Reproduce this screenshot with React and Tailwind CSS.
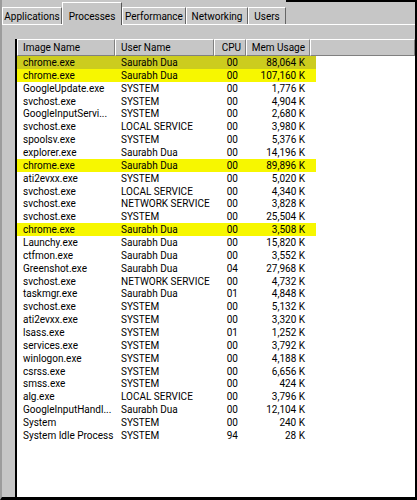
import React from "react";

const rows = [
  ["chrome.exe", "Saurabh Dua", "00", "88,064 K", "sel"],
  ["chrome.exe", "Saurabh Dua", "00", "107,160 K", "hl"],
  ["GoogleUpdate.exe", "SYSTEM", "00", "1,776 K"],
  ["svchost.exe", "SYSTEM", "00", "4,904 K"],
  ["GoogleInputServi...", "SYSTEM", "00", "2,680 K"],
  ["svchost.exe", "LOCAL SERVICE", "00", "3,980 K"],
  ["spoolsv.exe", "SYSTEM", "00", "5,376 K"],
  ["explorer.exe", "Saurabh Dua", "00", "14,196 K"],
  ["chrome.exe", "Saurabh Dua", "00", "89,896 K", "hl"],
  ["ati2evxx.exe", "SYSTEM", "00", "5,020 K"],
  ["svchost.exe", "LOCAL SERVICE", "00", "4,340 K"],
  ["svchost.exe", "NETWORK SERVICE", "00", "3,828 K"],
  ["svchost.exe", "SYSTEM", "00", "25,504 K"],
  ["chrome.exe", "Saurabh Dua", "00", "3,508 K", "hl"],
  ["Launchy.exe", "Saurabh Dua", "00", "15,820 K"],
  ["ctfmon.exe", "Saurabh Dua", "00", "3,552 K"],
  ["Greenshot.exe", "Saurabh Dua", "04", "27,968 K"],
  ["svchost.exe", "NETWORK SERVICE", "00", "4,732 K"],
  ["taskmgr.exe", "Saurabh Dua", "01", "4,848 K"],
  ["svchost.exe", "SYSTEM", "00", "5,132 K"],
  ["ati2evxx.exe", "SYSTEM", "00", "3,320 K"],
  ["lsass.exe", "SYSTEM", "01", "1,252 K"],
  ["services.exe", "SYSTEM", "00", "3,792 K"],
  ["winlogon.exe", "SYSTEM", "00", "4,188 K"],
  ["csrss.exe", "SYSTEM", "00", "6,656 K"],
  ["smss.exe", "SYSTEM", "00", "424 K"],
  ["alg.exe", "LOCAL SERVICE", "00", "3,796 K"],
  ["GoogleInputHandl...", "Saurabh Dua", "00", "12,104 K"],
  ["System", "SYSTEM", "00", "240 K"],
  ["System Idle Process", "SYSTEM", "94", "28 K"],
];

const tabs = [
  { label: "Applications", w: "w-[60px]" },
  { label: "Processes", w: "w-[60px]", active: true },
  { label: "Performance", w: "w-[64px]" },
  { label: "Networking", w: "w-[62px]" },
  { label: "Users", w: "w-[38px]" },
];

const HeaderCell = ({ children, className = "" }) => (
  <div
    className={`h-full flex items-center border-t border-l border-t-white border-l-white border-r border-b border-r-[#808080] border-b-[#808080] ${className}`}
  >
    {children}
  </div>
);

export default function App() {
  return (
    <div
      className="w-[417px] h-[500px] bg-[#c6c6c6] flex flex-col border-l-2 border-l-[#9c9c9c] border-r-2 border-r-black border-b-[3px] border-b-black text-black overflow-hidden"
      style={{ fontFamily: "Roboto, Arial, sans-serif", fontSize: "10px" }}
    >
      {/* Tab strip */}
      <div className="h-[25px] flex items-end border-b border-white shrink-0">
        {tabs.map((t) =>
          t.active ? (
            <div
              key={t.label}
              className={`${t.w} h-[23px] -mb-px flex justify-center items-start pt-[6px] bg-[#c6c6c6] border-t border-l border-white border-r border-r-[#555] relative z-10`}
            >
              {t.label}
            </div>
          ) : (
            <div
              key={t.label}
              className={`${t.w} h-[17px] flex justify-center items-center bg-[#cbcbcb] border-t border-l border-white border-r border-r-[#666]`}
            >
              {t.label}
            </div>
          )
        )}
        <div className="flex-1 self-stretch border-t-2 border-black" />
      </div>

      {/* Process list */}
      <div className="mt-[14px] ml-[13px] flex-1 bg-white border-l-2 border-black flex flex-col">
        <div className="h-[17px] flex shrink-0 bg-[#c6c6c6]">
          <HeaderCell className="w-[98px] pl-[5px]">Image Name</HeaderCell>
          <HeaderCell className="w-[99px] pl-[5px]">User Name</HeaderCell>
          <HeaderCell className="w-[32px] justify-end pr-[4px]">CPU</HeaderCell>
          <HeaderCell className="w-[64px] justify-end pr-[4px]">Mem Usage</HeaderCell>
          <HeaderCell className="flex-1" />
        </div>
        <div className="flex flex-col">
          {rows.map(([name, user, cpu, mem, mark], i) => (
            <div
              key={i}
              className={`h-[12.87px] w-[299px] flex items-center whitespace-nowrap ${
                mark === "sel" ? "bg-[#cccc1e]" : mark === "hl" ? "bg-[#f7f700]" : ""
              }`}
            >
              <div className="w-[98px] pl-[6px]">{name}</div>
              <div className="w-[99px] pl-[6px]">{user}</div>
              <div className="w-[32px] text-right pr-[8px]">{cpu}</div>
              <div className="w-[64px] text-right pr-[5px]">{mem}</div>
            </div>
          ))}
        </div>
      </div>
    </div>
  );
}
